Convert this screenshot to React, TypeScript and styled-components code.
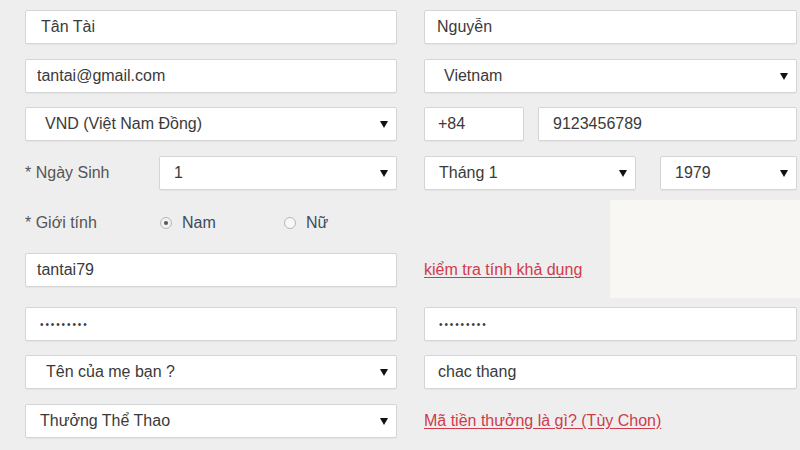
import React from "react";
import styled, { createGlobalStyle } from "styled-components";

const Global = createGlobalStyle`
  html, body { margin: 0; padding: 0; background: #eeeeee; }
  body { font-family: "Liberation Sans", Arial, sans-serif; }
  * { box-sizing: border-box; }
`;

const Page = styled.div`
  width: 800px;
  height: 450px;
  overflow: hidden;
  padding: 10px 0 0 25px;
  display: flex;
  flex-direction: column;
  background: #eeeeee;
`;

const Row = styled.div<{ $space?: number }>`
  display: grid;
  grid-template-columns: 372px 373px;
  column-gap: 27px;
  height: 34px;
  margin-top: ${(p) => p.$space ?? 0}px;
`;

const Split = styled.div<{ $cols: string; $gap: number }>`
  display: grid;
  grid-template-columns: ${(p) => p.$cols};
  column-gap: ${(p) => p.$gap}px;
  align-items: center;
  height: 34px;
`;

const TextInput = styled.input<{ $indent?: number; $dots?: boolean }>`
  display: block;
  width: 100%;
  height: 34px;
  margin: 0;
  border: 1px solid #d5d5d5;
  border-radius: 2px;
  background: #fff;
  box-shadow: 0 1px 1px rgba(0, 0, 0, 0.04);
  padding: 0 10px 0 ${(p) => p.$indent ?? 14}px;
  font-family: "Liberation Sans", Arial, sans-serif;
  font-size: ${(p) => (p.$dots ? "10px" : "16px")};
  letter-spacing: ${(p) => (p.$dots ? "1.9px" : "0")};
  color: #3a3a3a;
  outline: none;
`;

const SelectBox = styled.div<{ $indent?: number }>`
  display: flex;
  align-items: center;
  justify-content: space-between;
  height: 34px;
  background: #fff;
  border: 1px solid #d5d5d5;
  border-radius: 2px;
  box-shadow: 0 1px 1px rgba(0, 0, 0, 0.04);
  padding: 0 8px 0 ${(p) => p.$indent ?? 14}px;
  font-size: 16px;
  color: #3a3a3a;
`;

const Caret = styled.span`
  width: 0;
  height: 0;
  border-left: 4px solid transparent;
  border-right: 4px solid transparent;
  border-top: 7px solid #111;
`;

const Label = styled.span`
  font-size: 16px;
  color: #555;
`;

const Pair = styled.div`
  display: grid;
  grid-template-columns: 372px 373px;
  grid-template-rows: 34px 34px;
  column-gap: 27px;
  row-gap: 14px;
  margin-top: 15px;
`;

const GenderCell = styled.div`
  grid-column: 1;
  grid-row: 1;
  display: grid;
  grid-template-columns: 135px 124px 1fr;
  align-items: center;
  padding-top: 2px;
`;

const Option = styled.label`
  display: flex;
  align-items: center;
  gap: 10px;
  font-size: 16px;
  color: #3d4a5a;
`;

const Radio = styled.span<{ $on?: boolean }>`
  width: 12px;
  height: 12px;
  border-radius: 50%;
  border: 1px solid #b8b8b8;
  background: ${(p) => (p.$on ? "#f0f0f0" : "#f7f7f7")};
  display: flex;
  align-items: center;
  justify-content: center;
  &::after {
    content: "";
    width: 4px;
    height: 4px;
    border-radius: 50%;
    background: ${(p) => (p.$on ? "#555" : "transparent")};
  }
`;

const UserCell = styled.div`
  grid-column: 1;
  grid-row: 2;
`;

const Captcha = styled.div`
  grid-column: 2;
  grid-row: 1 / 3;
  justify-self: end;
  align-self: stretch;
  width: 190px;
  margin: -5px -3px -11px 0;
  background: #f8f7f4;
`;

const LinkCell = styled.div`
  grid-column: 2;
  grid-row: 2;
  align-self: center;
  display: flex;
`;

const RedLink = styled.a`
  font-size: 16px;
  color: #cf3b4b;
  text-decoration: underline;
  text-underline-offset: 2px;
  cursor: pointer;
`;

const Cell = styled.div`
  display: flex;
  align-items: center;
  height: 34px;
`;

const Select: React.FC<{ text: string; indent?: number }> = ({ text, indent }) => (
  <SelectBox $indent={indent}>
    <span>{text}</span>
    <Caret />
  </SelectBox>
);

export default function App() {
  return (
    <>
      <Global />
      <Page>
        <Row>
          <TextInput readOnly defaultValue="Tân Tài" $indent={15} />
          <TextInput readOnly defaultValue="Nguyễn" $indent={12} />
        </Row>
        <Row $space={15}>
          <TextInput readOnly defaultValue="tantai@gmail.com" $indent={11} />
          <Select text="Vietnam" indent={19} />
        </Row>
        <Row $space={14}>
          <Select text="VND (Việt Nam Đồng)" indent={19} />
          <Split $cols="100px 1fr" $gap={14}>
            <TextInput readOnly defaultValue="+84" $indent={13} />
            <TextInput readOnly defaultValue="9123456789" $indent={14} />
          </Split>
        </Row>
        <Row $space={15}>
          <Split $cols="134px 1fr" $gap={0}>
            <Label>* Ngày Sinh</Label>
            <Select text="1" indent={14} />
          </Split>
          <Split $cols="212px 137px" $gap={24}>
            <Select text="Tháng 1" indent={14} />
            <Select text="1979" indent={14} />
          </Split>
        </Row>
        <Pair>
          <GenderCell>
            <Label>* Giới tính</Label>
            <Option>
              <Radio $on />
              Nam
            </Option>
            <Option>
              <Radio />
              Nữ
            </Option>
          </GenderCell>
          <Captcha />
          <UserCell>
            <TextInput readOnly defaultValue="tantai79" $indent={11} />
          </UserCell>
          <LinkCell>
            <RedLink>kiểm tra tính khả dụng</RedLink>
          </LinkCell>
        </Pair>
        <Row $space={20}>
          <TextInput readOnly defaultValue="•••••••••" $indent={14} $dots />
          <TextInput readOnly defaultValue="•••••••••" $indent={14} $dots />
        </Row>
        <Row $space={14}>
          <Select text="Tên của mẹ bạn ?" indent={20} />
          <TextInput readOnly defaultValue="chac thang" $indent={13} />
        </Row>
        <Row $space={15}>
          <Select text="Thưởng Thể Thao" indent={14} />
          <Cell>
            <RedLink>Mã tiền thưởng là gì? (Tùy Chon)</RedLink>
          </Cell>
        </Row>
      </Page>
    </>
  );
}
